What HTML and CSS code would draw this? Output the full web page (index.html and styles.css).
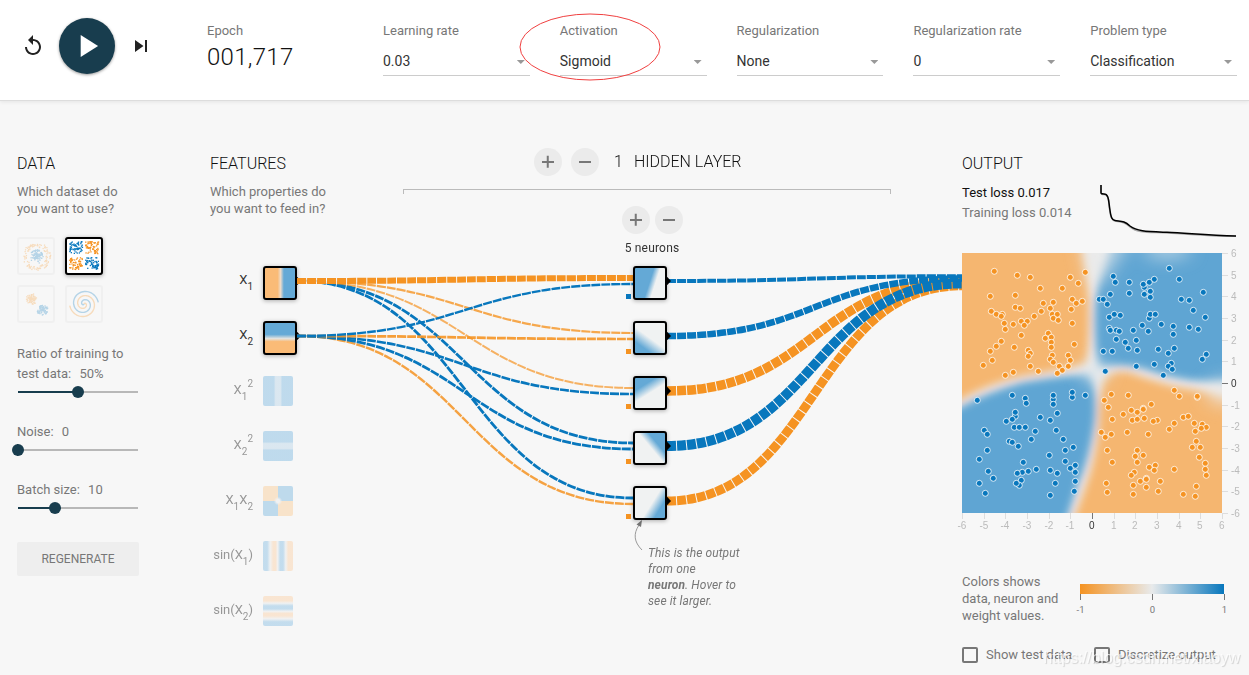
FILE: index.html
```html
<!DOCTYPE html>
<html lang="en">
<head>
  <meta charset="UTF-8" />
  <meta name="viewport" content="width=device-width, initial-scale=1.0"/>
  <title>Neural Network Playground</title>
  <link rel="stylesheet" href="styles.css">
</head>
<body>
  <!-- Top controls -->
  <header class="top-controls">
    <div class="timeline">
      <button class="icon-btn" title="Reset"><svg width="24" height="24" viewBox="0 0 24 24"><path d="M12 5V1L7 6l5 5V7c3.31 0 6 2.69 6 6s-2.69 6-6 6-6-2.69-6-6H4c0 4.42 3.58 8 8 8s8-3.58 8-8-3.58-8-8-8z"/></svg></button>
      <button class="play-btn" title="Run"><svg width="38" height="38" viewBox="0 0 24 24"><path d="M8 5v14l11-7z"/></svg></button>
      <button class="icon-btn" title="Step"><svg width="24" height="24" viewBox="0 0 24 24"><path d="M6 18l8.5-6L6 6v12zM16 6v12h2V6h-2z"/></svg></button>
    </div>
    <div class="control epoch">
      <span class="label">Epoch</span>
      <span class="epoch-value">001,717</span>
    </div>
    <div class="control">
      <span class="label">Learning rate</span>
      <div class="select">0.03</div>
    </div>
    <div class="control highlighted">
      <span class="label">Activation</span>
      <div class="select">Sigmoid</div>
      <svg class="ring" width="142" height="68"><ellipse cx="71" cy="34" rx="70" ry="33"/></svg>
    </div>
    <div class="control">
      <span class="label">Regularization</span>
      <div class="select">None</div>
    </div>
    <div class="control">
      <span class="label">Regularization rate</span>
      <div class="select">0</div>
    </div>
    <div class="control">
      <span class="label">Problem type</span>
      <div class="select">Classification</div>
    </div>
  </header>

  <main class="main-part">
    <!-- Data -->
    <section class="column data">
      <h4>DATA</h4>
      <p>Which dataset do<br>you want to use?</p>
      <div class="datasets">
        <svg class="dataset" id="data-circle" viewBox="0 0 34 34"></svg>
        <svg class="dataset selected" id="data-xor" viewBox="0 0 34 34"></svg>
        <svg class="dataset" id="data-gauss" viewBox="0 0 34 34"></svg>
        <svg class="dataset" id="data-spiral" viewBox="0 0 34 34"></svg>
      </div>
      <div class="slider-box">
        <label>Ratio of training to<br>test data: <span class="value">50%</span></label>
        <div class="slider half"></div>
      </div>
      <div class="slider-box">
        <label>Noise: <span class="value">0</span></label>
        <div class="slider zero"></div>
      </div>
      <div class="slider-box">
        <label>Batch size: <span class="value">10</span></label>
        <div class="slider third"></div>
      </div>
      <button class="regenerate">REGENERATE</button>
    </section>

    <!-- Features -->
    <section class="column features">
      <h4>FEATURES</h4>
      <p>Which properties do<br>you want to feed in?</p>
      <ul class="feature-list">
        <li class="active"><span class="name">X<sub>1</sub></span><i class="tile x1"></i></li>
        <li class="active"><span class="name">X<sub>2</sub></span><i class="tile x2"></i></li>
        <li><span class="name">X<sub>1</sub><sup>2</sup></span><i class="tile x1sq"></i></li>
        <li><span class="name">X<sub>2</sub><sup>2</sup></span><i class="tile x2sq"></i></li>
        <li><span class="name">X<sub>1</sub>X<sub>2</sub></span><i class="tile x1x2"></i></li>
        <li><span class="name">sin(X<sub>1</sub>)</span><i class="tile sin1"></i></li>
        <li><span class="name">sin(X<sub>2</sub>)</span><i class="tile sin2"></i></li>
      </ul>
    </section>

    <svg class="links" id="links" width="665" height="300"></svg>

    <!-- Hidden layers -->
    <section class="network">
      <div class="layer-head">
        <button class="round plus"></button>
        <button class="round minus"></button>
        <span class="layer-count">1</span>
        <span class="layer-title">HIDDEN LAYER</span>
      </div>
      <div class="bracket"></div>
      <div class="neuron-head">
        <div class="neuron-buttons">
          <button class="round plus"></button>
          <button class="round minus"></button>
        </div>
        <div class="neuron-count">5 neurons</div>
      </div>
      <div class="neurons">
        <div class="neuron n1"><i class="bias blue"></i></div>
        <div class="neuron n2"><i class="bias"></i></div>
        <div class="neuron n3"><i class="bias"></i></div>
        <div class="neuron n4"><i class="bias"></i></div>
        <div class="neuron n5"><i class="bias"></i></div>
      </div>
      <div class="callout">
        <svg width="15" height="34" viewBox="0 0 15 34"><path class="curve" d="M9 30C1 22 0 14 6 5"/><path class="tip" d="M9 0L3.500 4.500L8 7z"/></svg>
        <p>This is the output<br>from one<br><b>neuron</b>. Hover to<br>see it larger.</p>
      </div>
    </section>

    <!-- Output -->
    <section class="column output">
      <h4>OUTPUT</h4>
      <div class="metrics">
        <div>
          <div class="test">Test loss <span>0.017</span></div>
          <div class="train">Training loss <span>0.014</span></div>
        </div>
        <svg class="linechart" width="140" height="56" viewBox="0 0 140 56">
          <path class="train-line" d="M4 4V12Q4.300 13.500 7 13.500C12 13.500 11.500 20 12.500 28C13.500 37 15 40 18 40C24 41 27 40.500 33 46C40 52 50 51 70 52C90 52.500 110 55.500 139 55.500"/>
          <path d="M4 4V12Q4.300 13 7 13C12 13 11.500 20 12.800 28C14 37 15 39 18 39.500C24 40.500 27 39.500 33 45C40 50.500 50 50.500 70 51.300C90 52 110 54.500 139 55"/>
        </svg>
      </div>
      <svg class="heatmap" id="heatmap" width="287" height="287">
        <defs>
          <clipPath id="plot-area"><rect width="260" height="260"/></clipPath>
          <filter id="soft" x="-20%" y="-20%" width="140%" height="140%"><feGaussianBlur stdDeviation="4"/></filter>
          <filter id="softer" x="-50%" y="-50%" width="200%" height="200%"><feGaussianBlur stdDeviation="9"/></filter>
        </defs>
        <g clip-path="url(#plot-area)">
          <rect width="260" height="260" fill="#edecea"/>
          <g filter="url(#soft)">
            <path fill="#f5b670" d="M-30-30H116Q126 20 127 50Q128 90 124 111Q100 117 61 123Q28 130-2 147L-30 163z"/>
            <path fill="#5fa5d3" d="M290-30H158Q138 15 133 50Q131 90 137 115Q160 109 185 117Q211 126 236 128L290 131z"/>
            <path fill="#5fa5d3" d="M-30 170L0 153Q28 138 61 129Q95 123 128 121Q136 140 133 170Q128 205 116 232L97 290H-30z"/>
            <path fill="#f5b670" d="M290 148L260 142Q236 137 211 133Q185 126 170 120Q150 115 141 127Q137 150 137 170Q134 205 124 232L103 290H290z"/>
          </g>
          <g filter="url(#softer)">
            <ellipse cx="205" cy="-3" rx="24" ry="7" fill="#dde7ec" opacity=".8"/>
            <path d="M118-15H170Q152 10 140 30L128 30z" fill="#e8eaeb" opacity=".7"/>
            <ellipse cx="264" cy="139" rx="20" ry="12" fill="#e8eaeb" opacity=".8"/>
            <ellipse cx="133" cy="119" rx="13" ry="9" fill="#dbe5ec"/>
          </g>
        </g>
      </svg>
      <div class="legend">
        <p>Colors shows<br>data, neuron and<br>weight values.</p>
        <div class="colormap">
          <div class="gradient"></div>
          <div class="ticks"><span>-1</span><span>0</span><span>1</span></div>
        </div>
      </div>
      <div class="checks">
        <label><i class="checkbox"></i>Show test data</label>
        <label><i class="checkbox"></i>Discretize output</label>
      </div>
    </section>
  </main>
  <div class="watermark">https://blog.csdn.net/xiaoyw</div>
  <script src="script.js"></script>
</body>
</html>
```
FILE: styles.css
```css
* {
  box-sizing: border-box;
}

body {
  margin: 0;
  height: 675px;
  overflow: hidden;
  position: relative;
  background-color: #f7f7f7;
  color: #777;
  font-family: Roboto, "Liberation Sans", sans-serif;
  font-size: 13px;
}

button {
  border: none;
  padding: 0;
  background: none;
  font-family: inherit;
}

h4, p, ul {
  margin: 0;
  padding: 0;
  list-style: none;
}

svg {
  display: block;
}

/* Top controls */
.top-controls {
  height: 101px;
  padding: 18px 12px 0 20.5px;
  display: grid;
  grid-template-columns: 156.5px 146px repeat(5, 146.8px);
  column-gap: 30px;
  background-color: #fff;
  border-bottom: 1px solid #ddd;
  box-shadow: 0 1px 4px rgba(0, 0, 0, 0.08);
}

.timeline {
  display: flex;
  align-items: center;
  gap: 14px;
  height: 56px;
}

.icon-btn {
  width: 24px;
  height: 24px;
}

.icon-btn svg {
  fill: #222;
}

.play-btn {
  width: 56px;
  height: 56px;
  border-radius: 50%;
  background-color: #183d4e;
  box-shadow: 0 1px 3px rgba(0, 0, 0, 0.4);
  display: flex;
  align-items: center;
  justify-content: center;
}

.play-btn svg {
  fill: #fff;
}

.control {
  padding-top: 4px;
}

.control.epoch {
  width: 120px;
}

.label {
  display: block;
  line-height: 17px;
}

.epoch-value {
  display: block;
  line-height: 32px;
  margin-top: 2px;
  font-size: 24px;
  font-weight: 300;
  letter-spacing: 0.3px;
  color: #111;
}

.select {
  height: 30px;
  margin-top: 7px;
  padding-top: 6px;
  border-bottom: 1px solid #ccc;
  display: flex;
  justify-content: space-between;
  font-size: 14px;
  line-height: 18px;
  color: #333;
}

.select::after {
  content: "";
  width: 8px;
  height: 4px;
  margin: 8px 5px 0 0;
  background-color: #999;
  clip-path: polygon(0 0, 100% 0, 50% 100%);
}

.highlighted {
  position: relative;
}

.ring {
  position: absolute;
  left: -41px;
  top: -5px;
  fill: none;
  stroke: #f04040;
}

/* Columns */
.main-part {
  position: relative;
  display: grid;
  grid-template-columns: 193px 193px 559px 287px;
  padding-left: 17px;
}

.column {
  padding-top: 53px;
}

h4 {
  font-size: 16px;
  font-weight: 300;
  line-height: 20px;
  color: #111;
}

.column > p {
  margin-top: 9px;
  line-height: 17px;
}

.datasets {
  display: grid;
  grid-template-columns: 38px 38px;
  gap: 10px;
  margin-top: 20px;
}

.dataset {
  width: 38px;
  height: 38px;
  border: 2px solid #e0e0e0;
  border-radius: 3px;
  opacity: 0.27;
}

.dataset.selected {
  opacity: 1;
  border-color: #000;
  background-color: #fff;
  box-shadow: 0 1px 4px rgba(0, 0, 0, 0.35);
}

.slider-box {
  margin-bottom: 28px;
}

.datasets + .slider-box {
  margin-top: 21px;
}

.slider-box label {
  display: block;
  line-height: 20px;
}

.value {
  margin-left: 5px;
}

.slider {
  position: relative;
  width: 120px;
  height: 2px;
  margin: 7px 0 0 1px;
  background-color: #b8b8b8;
}

.slider-box + .slider-box {
  margin-top: 29px;
}

.slider::before {
  content: "";
  display: block;
  height: 2px;
  background-color: #183d4e;
}

.slider::after {
  content: "";
  position: absolute;
  top: -5px;
  width: 12px;
  height: 12px;
  border-radius: 50%;
  background-color: #183d4e;
}

.half::before { width: 50%; }
.half::after { left: 54px; }
.zero::before { width: 0; }
.zero::after { left: -6px; }
.third::before { width: 31%; }
.third::after { left: 31px; }

.regenerate {
  width: 122px;
  height: 34px;
  margin-top: 5px;
  border-radius: 2px;
  background-color: #eee;
  color: #777;
  font-size: 12px;
}

/* Features */
.feature-list {
  margin-top: 49px;
}

.feature-list li {
  display: flex;
  gap: 10px;
  height: 55px;
}

.feature-list .name {
  opacity: 0.75;
}

.feature-list .active .name {
  opacity: 1;
  color: #333;
}

.name {
  width: 43px;
  line-height: 28px;
  white-space: nowrap;
  display: flex;
  justify-content: flex-end;
}

.name sub,
.name sup {
  font-size: 10px;
  line-height: 28px;
  position: relative;
  top: 7px;
}

.name sup {
  top: -6px;
}

.tile {
  width: 30px;
  height: 30px;
  border-radius: 2px;
  opacity: 0.45;
}

.active .tile {
  position: relative;
  width: 34px;
  height: 34px;
  border: 2px solid #000;
  border-radius: 3px;
  opacity: 1;
  box-shadow: 0 1px 4px rgba(0, 0, 0, 0.3);
}

.active .tile::after,
.neuron::after {
  content: "";
  position: absolute;
  right: -6px;
  top: 9px;
  width: 5px;
  height: 8px;
  background-color: #000;
  clip-path: polygon(0 0, 25% 0, 100% 50%, 25% 100%, 0 100%);
}

.x1 { background: linear-gradient(90deg, #fabb77 42%, #eddccb 52%, #64a9d6 63%); }
.x2 { background: linear-gradient(180deg, #64a9d6 38%, #e3e3e0 52%, #fabb77 62%); }
.x1sq { background: linear-gradient(90deg, #7ab7e0 36%, #b8d4e8 42%, #b8d4e8 58%, #7ab7e0 64%); }
.x2sq { background: linear-gradient(180deg, #7ab7e0 36%, #b8d4e8 42%, #b8d4e8 58%, #7ab7e0 64%); }
.x1x2 {
  background:
    radial-gradient(circle, #e8eaeb 8%, rgba(232, 234, 235, 0) 20%),
    conic-gradient(#7ab7e0 25%, #fbcb94 0 50%, #7ab7e0 0 75%, #fbcb94 0);
}
.sin1 { background: linear-gradient(90deg, #84bce2 14%, #e8eaeb 24%, #fbcfa4 34%, #fbcfa4 42%, #e8eaeb 49%, #84bce2 57%, #84bce2 67%, #e8eaeb 76%, #fbcfa4 84%); }
.sin2 { background: linear-gradient(0deg, #84bce2 14%, #e8eaeb 24%, #fbcfa4 34%, #fbcfa4 42%, #e8eaeb 49%, #84bce2 57%, #84bce2 67%, #e8eaeb 76%, #fbcfa4 84%); }

/* Links lie under the nodes */
.links {
  position: absolute;
  left: 297px;
  top: 149px;
  fill: none;
  stroke-dasharray: 9 1;
}

/* Hidden layers */
.network {
  position: relative;
  width: 488px;
  padding-top: 47px;
}

.layer-head {
  display: flex;
  align-items: center;
  gap: 9px;
  height: 28px;
  padding-left: 131px;
  font-size: 16px;
  font-weight: 300;
  color: #111;
}

.layer-count {
  margin: 0 3px 0 6px;
  padding-bottom: 2px;
}

.layer-title {
  margin-left: -1px;
  padding-bottom: 2px;
}

.round {
  position: relative;
  width: 28px;
  height: 28px;
  border-radius: 50%;
  background-color: #ebebeb;
}

.round::before,
.plus::after {
  content: "";
  position: absolute;
  left: 8px;
  top: 13px;
  width: 12px;
  height: 2px;
  background-color: #777;
}

.plus::before,
.plus::after {
  height: 1.5px;
}

.plus::after {
  transform: rotate(90deg);
}

.bracket {
  height: 5px;
  margin-top: 13px;
  border: 1px solid #bbb;
  border-bottom: none;
}

.neuron-head {
  width: 120px;
  margin: 12px 0 0 189px;
  display: flex;
  flex-direction: column;
  align-items: center;
}

.neuron-buttons {
  display: flex;
  gap: 5px;
}

.neuron-count {
  margin-top: 5px;
  font-size: 12px;
  line-height: 18px;
  color: #333;
  letter-spacing: 0.2px;
}

.neurons {
  display: grid;
  grid-auto-rows: 34px;
  row-gap: 21px;
  width: 34px;
  margin: 9px 0 0 230px;
}

.neuron {
  position: relative;
  border: 2px solid #000;
  border-radius: 3px;
  box-shadow: 0 1px 4px rgba(0, 0, 0, 0.3);
}

.bias {
  position: absolute;
  left: -9px;
  top: 26px;
  width: 5px;
  height: 5px;
  background-color: #f59322;
}

.bias.blue {
  background-color: #0877bd;
}

.n1 { background: linear-gradient(108deg, #64a9d6 48%, #f0f2f2 64%); }
.n2 { background: linear-gradient(36deg, #64a9d6 22%, #f0f2f2 50%); }
.n3 { background: linear-gradient(148deg, #64a9d6 26%, #f0f2f2 50%); }
.n4 { background: linear-gradient(50deg, #f0f2f2 52%, #64a9d6 70%); }
.n5 { background: linear-gradient(122deg, #f0f2f2 54%, #64a9d6 78%); }

.callout {
  display: flex;
  margin-left: 230px;
  font-size: 12px;
  font-style: italic;
  line-height: 16px;
}

.callout p {
  padding-top: 25px;
  white-space: nowrap;
  letter-spacing: 0.1px;
}

.callout .curve {
  fill: none;
  stroke: #999;
}

.callout .tip {
  fill: #777;
}

/* Output */
.metrics {
  display: flex;
  justify-content: space-between;
  width: 275px;
  height: 79px;
  padding-top: 9px;
  line-height: 20px;
}

.test {
  color: #111;
}

.linechart {
  margin-top: -2px;
  fill: none;
  stroke: #000;
  stroke-width: 1.5;
}

.linechart .train-line {
  stroke: #aaa;
}

.heatmap {
  overflow: visible;
}

.heatmap circle {
  stroke: #fff;
  stroke-opacity: 0.8;
}

.heatmap text {
  font-family: "Liberation Sans", sans-serif;
  font-size: 10px;
  fill: #bbb;
}

.heatmap .zero-label {
  fill: #333;
}

.legend {
  display: flex;
  justify-content: space-between;
  width: 263px;
  margin-top: 33px;
  line-height: 17px;
}

.colormap {
  width: 145px;
  margin-top: 11px;
}

.gradient {
  width: 144px;
  height: 10px;
  background: linear-gradient(90deg, #f59322, #e8eaeb, #0877bd);
}

.ticks {
  display: flex;
  justify-content: space-between;
}

.ticks span {
  width: 1px;
  height: 6px;
  padding-top: 9px;
  background: linear-gradient(#777, #777) 0 0 / 1px 6px no-repeat;
  display: flex;
  justify-content: center;
  white-space: nowrap;
  font-size: 9.5px;
  line-height: 13px;
}

.checks {
  display: flex;
  gap: 20px;
  margin-top: 23px;
}

.checks label {
  display: flex;
  align-items: center;
  gap: 8px;
  width: 112px;
  line-height: 16px;
  white-space: nowrap;
}

.checkbox {
  flex: none;
  width: 16px;
  height: 16px;
  border: 2px solid #777;
  border-radius: 2px;
}

.watermark {
  position: absolute;
  right: 9px;
  bottom: 8px;
  font-family: "Liberation Sans", sans-serif;
  font-size: 16px;
  line-height: 18px;
  color: rgba(255, 255, 255, 0.7);
  text-shadow: 1px 1px 1px rgba(0, 0, 0, 0.15);
}
```
FILE: script.js
```js
const SVG_NS = 'http://www.w3.org/2000/svg';
const ORANGE = '#f59322';
const BLUE = '#0877bd';

function add(parent, tag, attrs, text) {
  const el = document.createElementNS(SVG_NS, tag);
  for (const key in attrs) el.setAttribute(key, attrs[key]);
  if (text !== undefined) el.textContent = text;
  parent.appendChild(el);
  return el;
}

// Small fixed-seed generator so the thumbnails are always the same
let seed = 7;
function rand() {
  seed = (seed * 16807) % 2147483647;
  return seed / 2147483647;
}

function dot(parent, x, y, color) {
  add(parent, 'rect', { x: x.toFixed(1), y: y.toFixed(1), width: 1.3, height: 1.3, fill: color });
}

function drawDatasets() {
  const circle = document.getElementById('data-circle');
  const xor = document.getElementById('data-xor');
  const gauss = document.getElementById('data-gauss');
  const spiral = document.getElementById('data-spiral');

  for (let i = 0; i < 110; i++) {
    const a = rand() * Math.PI * 2;
    const r = rand() * 7;
    dot(circle, 17 + Math.cos(a) * r, 17 + Math.sin(a) * r, BLUE);
    const b = rand() * Math.PI * 2;
    const q = 9.5 + rand() * 4.5;
    dot(circle, 17 + Math.cos(b) * q, 17 + Math.sin(b) * q, ORANGE);
  }
  for (let i = 0; i < 65; i++) {
    dot(xor, 2 + rand() * 13, 2 + rand() * 12, BLUE);
    dot(xor, 18 + rand() * 13, 2 + rand() * 12, ORANGE);
    dot(xor, 2 + rand() * 13, 18 + rand() * 12, ORANGE);
    dot(xor, 18 + rand() * 13, 18 + rand() * 12, BLUE);
  }
  for (let i = 0; i < 80; i++) {
    const a = rand() * Math.PI * 2;
    const r = rand() * 5.5;
    const b = rand() * Math.PI * 2;
    const q = rand() * 5.5;
    dot(gauss, 12 + Math.cos(a) * r, 11.5 + Math.sin(a) * r, ORANGE);
    dot(gauss, 23 + Math.cos(b) * q, 22.5 + Math.sin(b) * q, BLUE);
  }
  [[BLUE, Math.PI], [ORANGE, 0]].forEach(([color, shift]) => {
    let d = '';
    for (let t = 0; t <= 1; t += 0.01) {
      const a = -t * Math.PI * 3.5 + shift + Math.PI / 2;
      const x = 17 + Math.cos(a) * t * 14.5;
      const y = 17 - Math.sin(a) * t * 14.5;
      d += (d ? 'L' : 'M') + x.toFixed(2) + ' ' + y.toFixed(2);
    }
    add(spiral, 'path', { d: d, fill: 'none', stroke: color, 'stroke-width': 1.4 });
  });
}

function drawLink(x1, y1, x2, y2, color, width, opacity) {
  const mid = (x1 + x2) / 2;
  add(document.getElementById('links'), 'path', {
    d: `M${x1} ${y1}C${mid} ${y1} ${mid} ${y2} ${x2} ${y2}`,
    stroke: color,
    'stroke-width': width,
    'stroke-opacity': opacity || 1
  });
}

function drawLinks() {
  // [from x1, from x2] for each neuron
  const input = [
    [[ORANGE, 6], [BLUE, 2.4]],
    [[ORANGE, 2.2, 0.8], [ORANGE, 2.7, 0.9]],
    [[ORANGE, 2, 0.7], [BLUE, 2.6]],
    [[BLUE, 2.8], [BLUE, 2.8]],
    [[BLUE, 2.8], [ORANGE, 2.4, 0.85]]
  ];
  const output = [
    [2, ORANGE, 9.5],
    [4, ORANGE, 9],
    [3, BLUE, 10],
    [1, BLUE, 6.5],
    [0, BLUE, 4]
  ];
  for (let n = input.length - 1; n >= 0; n--) {
    input[n].forEach((link, i) => {
      drawLink(0, 31 + i * 55, 336, 31 + n * 55 + (i ? 3 : -3), ...link);
    });
  }
  output.forEach(([n, ...link]) => {
    drawLink(370, 31 + n * 55, 665, 31 + (n - 2) * 2.4, ...link);
  });
}

const orangePoints = [
  32,18, 55,22, 68,24, 108,24, 123,19, 116,30, 78,35, 100,35, 28,43, 53,42, 110,46, 114,50, 120,48,
  81,50, 91,49, 88,55, 109,56, 79,58, 29,58, 34,61, 40,61, 39,63, 53,54, 58,55, 72,63, 90,61, 95,61,
  91,65, 96,67, 110,70, 42,70, 43,76, 51,71, 59,68, 65,68, 62,72, 59,82, 86,80, 89,84, 83,85, 89,89,
  89,94, 39,88, 34,93, 52,94, 28,98, 112,91, 66,97, 68,100, 66,103, 90,102, 88,106, 91,109, 106,102,
  108,107, 106,113, 30,107, 21,112, 68,113, 76,118, 97,113, 100,117, 95,120, 51,119, 43,122,
  149,141, 166,142, 142,147, 146,154, 212,137, 217,143, 235,144, 235,143, 189,151, 161,161, 169,157,
  175,159, 181,155, 181,156, 150,166, 170,167, 175,166, 182,165, 195,167, 191,168, 212,170, 221,164,
  226,163, 232,170, 240,171, 244,174, 239,175, 233,178, 207,176, 139,179, 143,184, 149,181, 165,179,
  186,181, 234,188, 230,194, 238,194, 145,197, 175,197, 173,203, 181,202, 150,209, 175,209, 237,204,
  243,210, 243,216, 244,222, 212,216, 193,212, 187,214, 192,217, 172,219, 169,222, 184,225, 184,226,
  178,228, 198,228, 171,232, 184,234, 196,238, 171,241, 144,230, 145,239, 221,241, 234,233, 233,243
];

const bluePoints = [
  207,15, 151,23, 153,29, 167,29, 192,26, 182,34, 181,31, 187,29, 217,26, 148,41, 167,40, 182,41,
  188,38, 188,44, 241,39, 137,46, 141,46, 145,51, 219,46, 227,47, 231,57, 147,64, 152,61, 158,62,
  187,65, 188,61, 193,61, 243,64, 147,75, 148,77, 154,77, 157,78, 171,77, 180,72, 186,78, 199,71,
  211,73, 211,81, 227,74, 236,76, 154,86, 163,89, 174,87, 166,95, 175,97, 196,96, 206,100, 212,95,
  141,98, 150,98, 244,101, 240,106, 192,111, 209,110, 206,113, 210,116, 174,113, 143,118, 201,122,
  15,147, 50,142, 63,145, 64,150, 91,146, 91,142, 91,151, 110,144, 110,139, 123,142, 95,160, 53,163,
  53,159, 50,166, 44,168, 78,164, 88,167, 22,177, 25,181, 52,174, 57,174, 63,174, 73,178, 94,177,
  69,186, 101,186, 47,188, 50,189, 56,193, 111,194, 103,197, 25,197, 87,202, 17,206, 61,209, 103,208,
  113,212, 108,215, 113,219, 88,217, 95,220, 74,216, 66,218, 60,219, 55,220, 26,218, 31,225, 17,230,
  23,240, 59,227, 57,232, 54,230, 93,230, 113,228, 112,238, 88,242
];

function drawHeatmap() {
  const svg = document.getElementById('heatmap');
  [[orangePoints, ORANGE], [bluePoints, BLUE]].forEach(([points, color]) => {
    for (let i = 0; i < points.length; i += 2) {
      add(svg, 'circle', { cx: points[i] + 0.3, cy: points[i + 1] + 0.3, r: 3, fill: color });
    }
  });
  for (let v = -6; v <= 6; v++) {
    const p = Math.round((v + 6) * 260 / 12) + 0.5;
    const q = 260 - Math.round((v + 6) * 260 / 12) + 0.5;
    const stroke = v === 0 ? '#777' : '#ddd';
    const cls = v === 0 ? 'zero-label' : '';
    add(svg, 'path', { d: `M${p} 260v6M260 ${q}h6`, stroke: stroke });
    add(svg, 'text', { x: p - 0.6, y: 276, 'text-anchor': 'middle', class: cls }, v);
    add(svg, 'text', { x: 269, y: q + 3, class: cls }, v);
  }
}

drawDatasets();
drawLinks();
drawHeatmap();
```
